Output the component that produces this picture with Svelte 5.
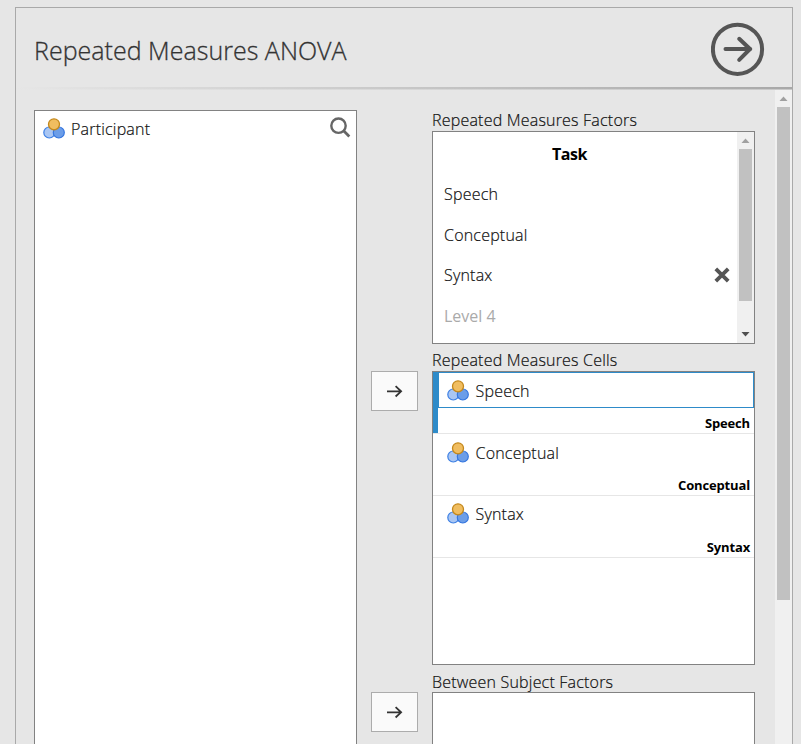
<script>
  const levels = ['Speech', 'Conceptual', 'Syntax'];
</script>

{#snippet nominal()}
  <svg class="nominal" width="22" height="21" viewBox="0 0 22 21">
    <circle cx="6.3" cy="14.5" r="5.5" fill="#a9c6f3" stroke="#3e80e4" stroke-width="1.2" />
    <circle cx="15.8" cy="14.5" r="5.5" fill="#6b9de8" stroke="#3576df" stroke-width="1.2" />
    <circle cx="11" cy="6.3" r="5.5" fill="#f0bd60" stroke="#c4881c" stroke-width="1.3" />
  </svg>
{/snippet}

{#snippet assign()}
  <button class="assign" aria-label="Assign">
    <svg width="16" height="14" viewBox="0 0 16 14" fill="none" stroke="#333" stroke-width="1.8">
      <path d="M0 7.3H14.4M8.6 2.1L14.1 7.3L8.6 12.5" />
    </svg>
  </button>
{/snippet}

<div class="page">
  <section class="panel">
    <header>
      <h1>Repeated Measures ANOVA</h1>
      <svg width="54" height="54" viewBox="0 0 54 54" fill="none" stroke="#555" stroke-width="4">
        <circle cx="26.5" cy="27.3" r="24.6" />
        <path d="M14.5 27H39.3M28.2 16.8L39 27L28.2 37.8" stroke-linecap="round" stroke-linejoin="round" />
      </svg>
    </header>
    <div class="rule"></div>
    <div class="body">
      <div class="content">
        <div class="box variables">
          {@render nominal()}
          <span>Participant</span>
          <svg class="search" width="21" height="21" viewBox="0 0 21 21" fill="none" stroke="#666">
            <circle cx="8.5" cy="8.7" r="7.2" stroke-width="2.4" />
            <path d="M13.4 13.6L19.3 19.4" stroke-width="2.8" />
          </svg>
        </div>
        <div class="arrows">
          {@render assign()}
          {@render assign()}
        </div>
        <div class="targets">
          <div class="label l1">Repeated Measures Factors</div>
          <div class="box factors">
            <div class="levels">
              <div class="level task">Task</div>
              {#each levels as level}
                <div class="level">
                  <span>{level}</span>
                  {#if level === 'Syntax'}
                    <svg width="16" height="16" viewBox="0 0 16 16" stroke="#555" stroke-width="3.8">
                      <path d="M1.8 1.8L14.2 14.2M14.2 1.8L1.8 14.2" />
                    </svg>
                  {/if}
                </div>
              {/each}
              <div class="level new"><span>Level 4</span></div>
            </div>
            <div class="scroll">
              <svg width="17" height="17"><path d="M4.5 11L8.5 6.5L12.5 11Z" fill="#a0a0a0" /></svg>
              <div class="thumb"></div>
              <svg width="17" height="17"><path d="M4.5 6L12.5 6L8.5 10.5Z" fill="#505050" /></svg>
            </div>
          </div>
          <div class="label l2">Repeated Measures Cells</div>
          <div class="box cells">
            {#each levels as level, i}
              <div class="cell" class:selected={i === 0}>
                <div class="item">
                  {@render nominal()}
                  <span>{level}</span>
                </div>
                <div class="sub">{level}</div>
              </div>
            {/each}
          </div>
          <div class="label l3">Between Subject Factors</div>
          <div class="box between"></div>
        </div>
      </div>
      <div class="scroll outer">
        <svg width="17" height="17"><path d="M4.5 11L8.5 6.5L12.5 11Z" fill="#a0a0a0" /></svg>
        <div class="thumb"></div>
      </div>
    </div>
  </section>
</div>

<style>
  :global(body) { overflow: hidden; }
  .page {
    box-sizing: border-box;
    width: 801px;
    height: 744px;
    padding: 7px 8px 0 15px;
    overflow: hidden;
    background: #e6e6e6;
    color: #111;
    font: 300 16px/22px "Open Sans", "Noto Sans", sans-serif;
    letter-spacing: 0.2px;
    -webkit-text-stroke: 0.2px;
    white-space: nowrap;
  }
  .panel {
    box-sizing: border-box;
    width: 778px;
    height: 760px;
    border: 1px solid #a9a9a9;
  }
  header {
    display: flex;
    justify-content: space-between;
    height: 79px;
    padding: 0 27px 0 18px;
    box-sizing: border-box;
  }
  header svg { margin-top: 14px; }
  h1 {
    margin: 23px 0 0;
    font-size: 25px;
    line-height: 38px;
    font-weight: 300;
    color: #333;
    letter-spacing: 0.02px;
    -webkit-text-stroke: 0.3px;
  }
  .rule {
    height: 3px;
    background: linear-gradient(to bottom, transparent 0 67%, #e6e6e688 67%), linear-gradient(to right, #e6e6e6, #a8a8a8);
  }
  .body { display: flex; height: 670px; }
  .content {
    display: flex;
    align-items: flex-start;
    gap: 14px;
    width: 759px;
    box-sizing: border-box;
    padding-left: 18px;
  }
  .box {
    box-sizing: border-box;
    width: 323px;
    border: 1px solid #828282;
    background: #fff;
  }
  .variables {
    display: flex;
    align-items: flex-start;
    height: 650px;
    margin-top: 20px;
    padding: 7px 5px 0 8px;
  }
  .variables span { margin-left: 6px; }
  .search { margin: -1px 0 0 auto; }
  .nominal { flex: none; }
  .variables .nominal { margin-top: -0.5px; }
  .arrows {
    display: flex;
    flex-direction: column;
    gap: 281px;
    margin-top: 281px;
  }
  .assign {
    display: flex;
    align-items: center;
    justify-content: center;
    width: 47px;
    height: 40px;
    padding: 0;
    border: 1px solid #acacac;
    background: #fafafa;
  }
  .targets { padding-top: 19px; }
  .label { height: 22px; }
  .l2 { height: 22px; padding-top: 5px; }
  .l3 { height: 21px; padding-top: 6px; }
  .factors { display: flex; height: 213px; }
  .levels { width: 304px; padding-top: 2px; }
  .level {
    display: flex;
    align-items: center;
    justify-content: space-between;
    height: 40.3px;
    padding: 0 7px 0 11px;
  }
  .level svg { margin-top: -1px; }
  .task {
    justify-content: center;
    padding: 0 31px 0 0;
    font-weight: 700;
    letter-spacing: -0.4px;
    -webkit-text-stroke: 0;
    color: #000;
  }
  .new {
    padding-top: 1px;
    font-weight: 400;
    letter-spacing: 0;
    -webkit-text-stroke: 0;
    color: #aaa;
  }
  .scroll {
    display: flex;
    flex-direction: column;
    align-items: center;
    width: 17px;
    background: #f0f0f0;
  }
  .thumb { width: 13px; height: 152px; background: #c1c1c1; }
  .factors .scroll svg:last-child { margin-top: auto; }
  .outer .thumb { height: 493px; }
  .cells { height: 294px; }
  .cell {
    box-sizing: border-box;
    height: 62px;
    padding-left: 5px;
    border-bottom: 1px solid #e6e6e6;
  }
  .item {
    display: flex;
    align-items: center;
    box-sizing: border-box;
    height: 36px;
    padding-left: 8px;
    border: 1px solid transparent;
  }
  .item .nominal { margin-top: 0; }
  .item span { margin: 2px 0 0 6.5px; }
  .cell:last-child .item span { margin-top: 0; }
  .cell:last-child .nominal { margin-top: -2px; }
  .selected { background: linear-gradient(#2e8bc9, #2e8bc9) 0 0 / 5px 100% no-repeat; }
  .selected .item { border-color: #2e8bc9; }
  .sub {
    padding-right: 4px;
    text-align: right;
    font-size: 13px;
    line-height: 31px;
    height: 25px;
    font-weight: 700;
    letter-spacing: -0.15px;
    -webkit-text-stroke: 0;
    color: #000;
  }
  .between { height: 80px; }
</style>
